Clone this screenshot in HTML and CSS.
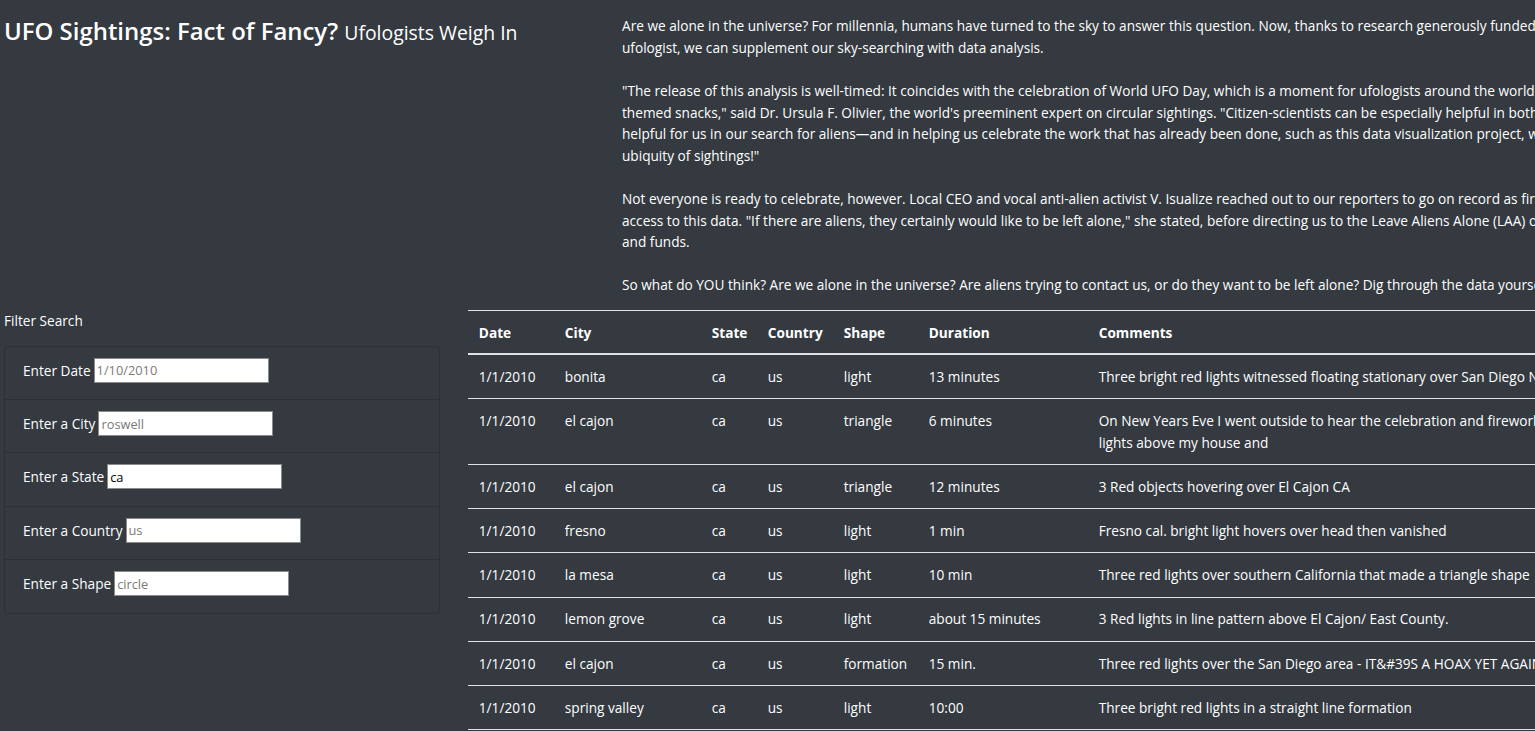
FILE: index.html
```html
<!DOCTYPE html>
<html lang="en">
<head>
<meta charset="utf-8">
<title>UFO Sightings</title>
<link rel="stylesheet" href="styles.css">
</head>
<body>
<header class="hero">
  <div class="title-col">
    <h1 class="title">UFO Sightings: Fact of Fancy? <small class="subtitle">Ufologists Weigh In</small></h1>
  </div>
  <div class="intro-col">
    <p class="intro"><span class="ln">Are we alone in the universe? For millennia, humans have turned to the sky to answer this question. Now, thanks to research generously funded by Dana, a former data analyst turned</span><br><span class="ln">ufologist, we can supplement our sky-searching with data analysis.</span></p>
    <p class="intro"><span class="ln">"The release of this analysis is well-timed: It coincides with the celebration of World UFO Day, which is a moment for ufologists around the world to celebrate, unite, and share UFO-</span><br><span class="ln">themed snacks," said Dr. Ursula F. Olivier, the world's preeminent expert on circular sightings. "Citizen-scientists can be especially helpful in both spotting and reporting UFOs. Data is always</span><br><span class="ln">helpful for us in our search for aliens—and in helping us celebrate the work that has already been done, such as this data visualization project, which highlights the</span><br><span class="ln">ubiquity of sightings!"</span></p>
    <p class="intro"><span class="ln">Not everyone is ready to celebrate, however. Local CEO and vocal anti-alien activist V. Isualize reached out to our reporters to go on record as firmly against public</span><br><span class="ln">access to this data. "If there are aliens, they certainly would like to be left alone," she stated, before directing us to the Leave Aliens Alone (LAA) organization for more info</span><br><span class="ln">and funds.</span></p>
    <p class="intro last"><span class="ln">So what do YOU think? Are we alone in the universe? Are aliens trying to contact us, or do they want to be left alone? Dig through the data yourself and see what you find!</span></p>
  </div>
</header>

<main class="main">
  <aside class="filters">
    <div class="filter-title">Filter Search</div>
    <ul class="panel">
      <li class="item"><label for="datetime">Enter Date</label><input id="datetime" type="text" placeholder="1/10/2010"></li>
      <li class="item"><label for="city">Enter a City</label><input id="city" type="text" placeholder="roswell"></li>
      <li class="item"><label for="state">Enter a State</label><input id="state" type="text" value="ca"></li>
      <li class="item"><label for="country">Enter a Country</label><input id="country" type="text" placeholder="us"></li>
      <li class="item"><label for="shape">Enter a Shape</label><input id="shape" type="text" placeholder="circle"></li>
    </ul>
  </aside>

  <section class="table-wrap">
    <table class="ufo-table">
      <thead>
        <tr>
          <th class="c-date">Date</th>
          <th class="c-city">City</th>
          <th class="c-state">State</th>
          <th class="c-country">Country</th>
          <th class="c-shape">Shape</th>
          <th class="c-dur">Duration</th>
          <th class="c-com">Comments</th>
        </tr>
      </thead>
      <tbody>
        <tr><td>1/1/2010</td><td>bonita</td><td>ca</td><td>us</td><td>light</td><td>13 minutes</td><td class="com">Three bright red lights witnessed floating stationary over San Diego New Years Night 2009</td></tr>
        <tr><td>1/1/2010</td><td>el cajon</td><td>ca</td><td>us</td><td>triangle</td><td>6 minutes</td><td class="com">On New Years Eve I went outside to hear the celebration and fireworks and saw three red<br>lights above my house and</td></tr>
        <tr><td>1/1/2010</td><td>el cajon</td><td>ca</td><td>us</td><td>triangle</td><td>12 minutes</td><td class="com">3 Red objects hovering over El Cajon CA</td></tr>
        <tr><td>1/1/2010</td><td>fresno</td><td>ca</td><td>us</td><td>light</td><td>1 min</td><td class="com">Fresno cal. bright light hovers over head then vanished</td></tr>
        <tr><td>1/1/2010</td><td>la mesa</td><td>ca</td><td>us</td><td>light</td><td>10 min</td><td class="com">Three red lights over southern California that made a triangle shape</td></tr>
        <tr><td>1/1/2010</td><td>lemon grove</td><td>ca</td><td>us</td><td>light</td><td>about 15 minutes</td><td class="com">3 Red lights in line pattern above El Cajon/ East County.</td></tr>
        <tr><td>1/1/2010</td><td>el cajon</td><td>ca</td><td>us</td><td>formation</td><td>15 min.</td><td class="com">Three red lights over the San Diego area - IT&amp;#39S A HOAX YET AGAIN!</td></tr>
        <tr><td>1/1/2010</td><td>spring valley</td><td>ca</td><td>us</td><td>light</td><td>10:00</td><td class="com">Three bright red lights in a straight line formation</td></tr>
        <tr><td>1/1/2010</td><td>la mesa</td><td>ca</td><td>us</td><td>light</td><td>5 minutes</td><td class="com">Three red lights in the sky</td></tr>
      </tbody>
    </table>
  </section>
</main>
</body>
</html>
```

FILE: styles.css
```css
html {
  overflow-x: hidden;
}

body {
  margin: 0;
  background: #343a40;
  color: #ffffff;
  font-family: "Open Sans", "Noto Sans", sans-serif;
  font-size: 13.65px;
  line-height: 21.6px;
}

.hero {
  display: flex;
  align-items: flex-start;
}

.title-col {
  flex: none;
  width: 622px;
  padding-left: 4px;
  padding-top: 16px;
  box-sizing: border-box;
}

.title {
  margin: 0;
  font-size: 23.95px;
  font-weight: 600;
  line-height: 30px;
  white-space: nowrap;
}

.subtitle {
  font-size: 19.4px;
  font-weight: 400;
}

.intro-col {
  flex: none;
  padding-top: 15.2px;
}

.intro {
  margin: 0 0 21.6px 0;
  white-space: nowrap;
}

.intro.last {
  margin-bottom: 13.8px;
}

.main {
  display: flex;
  align-items: flex-start;
}

.filters {
  flex: none;
  width: 436px;
  margin-left: 4px;
}

.filter-title {
  margin-bottom: 14.4px;
}

.panel {
  list-style: none;
  margin: 0;
  padding: 0;
  border: 1px solid #2c3136;
  border-radius: 3.6px;
}

.item {
  display: flex;
  align-items: flex-start;
  height: 53.4px;
  box-sizing: border-box;
  padding: 11px 18px 0 18px;
  border-top: 1px solid #2c3136;
}

.item:first-child {
  border-top: none;
  height: 52.4px;
}

.item label {
  line-height: 25px;
  white-space: nowrap;
}

.item input {
  margin: 0 0 0 3px;
  width: 175px;
  height: 25px;
  box-sizing: border-box;
  padding: 1px 2px;
  border: 1px solid #8a8a8a;
  border-radius: 0;
  background: #ffffff;
  color: #000000;
  font-family: "Open Sans", "Noto Sans", sans-serif;
  font-size: 12.8px;
}

.item input::placeholder {
  color: #7a7a7a;
}

.table-wrap {
  flex: none;
  margin-left: 28px;
}

.ufo-table {
  border-collapse: collapse;
  width: 1300px;
  table-layout: fixed;
}

.ufo-table th,
.ufo-table td {
  padding: 10.8px;
  text-align: left;
  vertical-align: top;
  border-top: 1px solid #dee2e6;
  white-space: nowrap;
}

.ufo-table th {
  font-weight: 700;
  border-bottom: 2px solid #dee2e6;
}

.ufo-table thead th {
  padding-bottom: 10px;
}

.c-date { width: 64.4px; }
.c-city { width: 125.4px; }
.c-state { width: 34.4px; }
.c-country { width: 54.4px; }
.c-shape { width: 63.4px; }
.c-dur { width: 148.4px; }
.c-com { width: 720px; }
```
